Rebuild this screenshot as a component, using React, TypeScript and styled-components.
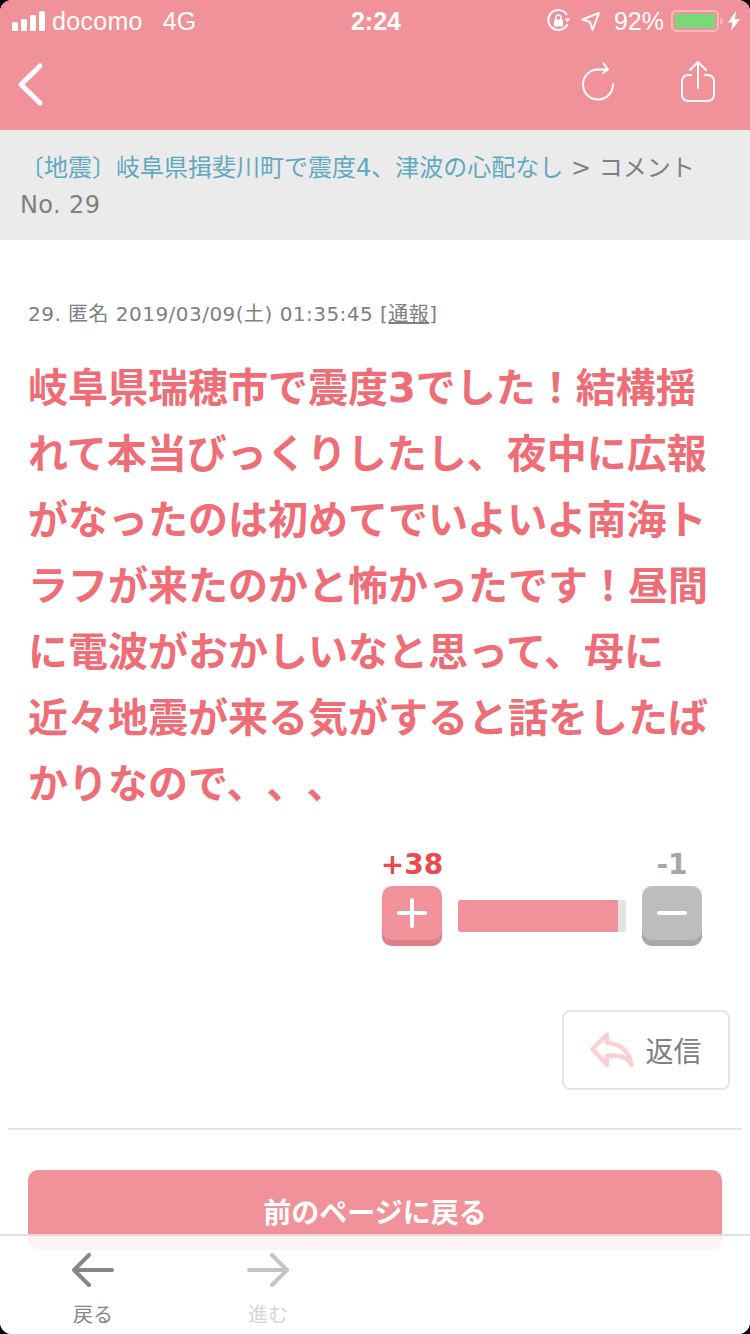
import styled, { createGlobalStyle } from "styled-components";

const pink = "#f19199";

const GlobalStyle = createGlobalStyle`
  html, body {
    margin: 0;
    padding: 0;
    background: #000;
  }
  * {
    box-sizing: border-box;
  }
`;

const Screen = styled.div`
  position: relative;
  width: 750px;
  height: 1334px;
  overflow: hidden;
  background: #fff;
  border-radius: 12px;
  font-family: "DejaVu Sans", "Noto Sans CJK JP", sans-serif;
  text-spacing-trim: space-all;
`;
const Header = styled.header`
  height: 130px;
  background: ${pink};
  color: #fff;
`;
const StatusBar = styled.div`
  height: 40px;
  padding: 2px 10px 0 12px;
  display: flex;
  align-items: center;
  justify-content: space-between;
  font-family: "Liberation Sans", sans-serif;
  font-size: 25px;
`;
const StatusSide = styled.div<{ $end?: boolean }>`
  width: 300px;
  display: flex;
  align-items: center;
  justify-content: ${(p) => (p.$end ? "flex-end" : "flex-start")};
`;
const Carrier = styled.span`
  margin-left: 7px;
  font-size: 25px;
  letter-spacing: 0.3px;
`;
const Network = styled.span`
  margin-left: 20px;
  font-size: 25px;
`;
const Clock = styled.span`
  font-weight: 700;
  font-size: 25px;
`;
const Percent = styled.span`
  margin: 0 7px 0 13px;
  font-size: 25px;
`;
const NavBar = styled.div`
  height: 90px;
  padding: 0 35px 0 16px;
  display: flex;
  align-items: flex-start;
  justify-content: space-between;
`;
const BackButton = styled.div`
  margin-top: 21px;
  height: 48px;
`;
const NavActions = styled.div`
  display: flex;
  gap: 66px;
  margin-top: 21px;
`;
const Breadcrumb = styled.nav`
  height: 110px;
  padding: 20px 20px 0;
  background: #ebebeb;
  color: #808080;
  font-size: 24px;
  line-height: 37px;
`;
const CrumbLink = styled.span`
  color: #60a9bf;
`;
const CrumbNumber = styled.div`
  letter-spacing: 0.4px;
`;
const Post = styled.section`
  padding: 60px 28px 0;
`;
const Meta = styled.div`
  color: #808080;
  font-size: 20px;
  line-height: 28px;
  letter-spacing: 0.47px;
`;
const Report = styled.span`
  text-decoration: underline;
`;
const Body = styled.p`
  margin: 27px 0 0;
  color: #ee6d76;
  font-size: 40px;
  font-weight: 700;
  line-height: 66px;
  white-space: nowrap;
`;
const VoteRow = styled.div`
  margin-top: 33px;
  padding-right: 48px;
  display: flex;
  justify-content: flex-end;
  align-items: flex-end;
  gap: 16px;
`;
const VoteColumn = styled.div`
  width: 60px;
  display: flex;
  flex-direction: column;
  align-items: center;
`;
const VoteCount = styled.div<{ $up?: boolean }>`
  height: 30px;
  margin-bottom: 6px;
  color: ${(p) => (p.$up ? "#e94a4f" : "#a6a6a6")};
  font-size: 28px;
  font-weight: 700;
  line-height: 30px;
  white-space: nowrap;
`;
const VoteButton = styled.div<{ $up?: boolean }>`
  width: 60px;
  height: 60px;
  border-radius: 10px;
  display: flex;
  align-items: center;
  justify-content: center;
  padding-bottom: 6px;
  background: ${(p) => (p.$up ? pink : "#bdbdbd")};
  box-shadow: inset 0 -6px 0 ${(p) => (p.$up ? "#df7f88" : "#a8a8a8")};
`;
const Meter = styled.div`
  width: 168px;
  height: 32px;
  margin-bottom: 14px;
  border-radius: 3px;
  overflow: hidden;
  background: #e3e3e3;
`;
const MeterFill = styled.div`
  height: 100%;
  background: ${pink};
`;
const ReplyRow = styled.div`
  margin-top: 64px;
  padding-right: 20px;
  display: flex;
  justify-content: flex-end;
  width: 750px;
`;
const ReplyButton = styled.div`
  width: 168px;
  height: 80px;
  border: 2px solid #e5e5e5;
  border-radius: 8px;
  display: flex;
  align-items: center;
  justify-content: center;
  gap: 11px;
  color: #808080;
  font-size: 28px;
`;
const Divider = styled.hr`
  margin: 38px 8px 0;
  border: 0;
  border-top: 2px solid #e5e5e5;
`;
const BackPageWrap = styled.div`
  padding: 40px 28px 0;
`;
const BackPageButton = styled.div`
  height: 80px;
  border-radius: 10px;
  background: ${pink};
  color: #fff;
  font-size: 28px;
  font-weight: 700;
  line-height: 88px;
  text-align: center;
`;
const Toolbar = styled.footer`
  position: absolute;
  left: 0;
  right: 0;
  bottom: 0;
  height: 100px;
  padding-left: 72px;
  display: flex;
  gap: 133px;
  border-top: 2px solid rgba(205, 205, 205, 0.6);
  background: rgba(255, 255, 255, 0.88);
`;
const ToolItem = styled.div<{ $off?: boolean }>`
  width: 42px;
  padding-top: 17px;
  display: flex;
  flex-direction: column;
  align-items: center;
  color: ${(p) => (p.$off ? "#d6d6d6" : "#868686")};
  font-size: 20px;
  line-height: 26px;
  white-space: nowrap;
`;
const ToolLabel = styled.span`
  margin-top: 15px;
`;

const SignalBars = () => (
  <svg width="33" height="20" viewBox="0 0 33 20" fill="#fff">
    <rect x="0" y="11" width="6" height="9" rx="1.500" />
    <rect x="9" y="8" width="6" height="12" rx="1.500" />
    <rect x="18" y="4" width="6" height="16" rx="1.500" />
    <rect x="27" y="0" width="6" height="20" rx="1.500" />
  </svg>
);

const RotationLock = () => (
  <svg width="24" height="24" viewBox="0 0 24 24" fill="none" stroke="#fff" strokeWidth="2" style={{ marginRight: 10 }}>
    <path d="M20.500 15A10 10 0 1 1 20 6" />
    <path d="M17.500 9.500h6l-3 3.500z" fill="#fff" stroke="none" />
    <rect x="7" y="10.500" width="9" height="7" rx="1" fill="#fff" stroke="none" />
    <path d="M9 11V8.500a2.500 2.500 0 0 1 5 0V11" strokeWidth="1.500" />
  </svg>
);

const LocationArrow = () => (
  <svg width="20" height="21" viewBox="0 0 20 21" fill="none" stroke="#fff" strokeWidth="2" strokeLinejoin="round">
    <path d="M1.500 8.500L18 2l-6.500 17-2.500-8z" />
  </svg>
);

const Battery = () => (
  <svg width="52" height="22" viewBox="0 0 52 22">
    <rect x="1" y="1" width="46" height="20" rx="4" fill="none" stroke="#f8b9bf" strokeWidth="2" />
    <rect x="4" y="4" width="40" height="14" rx="1" fill="#7ad977" />
    <path d="M49 7.500c2 .5 3 2 3 3.500s-1 3-3 3.500z" fill="#f8b9bf" />
  </svg>
);

const Bolt = () => (
  <svg width="12" height="20" viewBox="0 0 12 20" fill="#fff" style={{ marginLeft: 5 }}>
    <path d="M8 0L0 11.500h4.500L3 20l9-12H7z" />
  </svg>
);

const ChevronLeft = () => (
  <svg width="30" height="48" viewBox="0 0 30 48" fill="none" stroke="#fff" strokeWidth="5" strokeLinecap="round" strokeLinejoin="round">
    <path d="M24 5L5 23.500 24 42" />
  </svg>
);

const Reload = () => (
  <svg width="34" height="40" viewBox="0 0 34 40" fill="none" stroke="#fff" strokeWidth="2" strokeLinecap="round" strokeLinejoin="round">
    <path d="M32 23A15 15 0 1 1 17 8.500h9" />
    <path d="M22.500 2.500L27 8.500l-5 3.500" />
  </svg>
);

const Share = () => (
  <svg width="34" height="42" viewBox="0 0 34 42" fill="none" stroke="#fff" strokeWidth="2" strokeLinecap="round" strokeLinejoin="round">
    <path d="M10 14H7a6 6 0 0 0-6 6v14a6 6 0 0 0 6 6h20a6 6 0 0 0 6-6V20a6 6 0 0 0-6-6h-3" />
    <path d="M17 1v26M9 9l8-8 8 8" />
  </svg>
);

const VoteIcon = ({ plus }: { plus?: boolean }) => (
  <svg width="30" height="30" viewBox="0 0 30 30" fill="none" stroke="#fff" strokeWidth="4" strokeLinecap="round">
    <path d="M2 15h26" />
    {plus && <path d="M15 2v26" />}
  </svg>
);

const ReplyArrow = () => (
  <svg width="44" height="36" viewBox="0 0 44 36" fill="none" stroke="#f9d0d4" strokeWidth="4.500" strokeLinecap="round" strokeLinejoin="round">
    <path d="M17 2.500L2.500 17 17 33V23.500c11 0 20 0 24.500 9.500C40 20 30 11 17 11z" />
  </svg>
);

const ToolArrow = ({ forward, color }: { forward?: boolean; color: string }) => (
  <svg width="42" height="34" viewBox="0 0 42 34" fill="none" stroke={color} strokeWidth="4" strokeLinecap="round" strokeLinejoin="round">
    {forward ? <path d="M2 17h38M25 2l15 15-15 15" /> : <path d="M40 17H2M17 2L2 17l15 15" />}
  </svg>
);

const App = () => {
  const up = 38;
  const down = 1;
  return (
    <Screen>
      <GlobalStyle />
      <Header>
        <StatusBar>
          <StatusSide>
            <SignalBars />
            <Carrier>docomo</Carrier>
            <Network>4G</Network>
          </StatusSide>
          <Clock>2:24</Clock>
          <StatusSide $end>
            <RotationLock />
            <LocationArrow />
            <Percent>92%</Percent>
            <Battery />
            <Bolt />
          </StatusSide>
        </StatusBar>
        <NavBar>
          <BackButton>
            <ChevronLeft />
          </BackButton>
          <NavActions>
            <Reload />
            <Share />
          </NavActions>
        </NavBar>
      </Header>
      <Breadcrumb>
        <CrumbLink>〔地震〕岐阜県揖斐川町で震度4、津波の心配なし</CrumbLink> &gt; コメント
        <CrumbNumber>No. 29</CrumbNumber>
      </Breadcrumb>
      <Post>
        <Meta>
          29. 匿名 2019/03/09(土) 01:35:45 [<Report>通報</Report>]
        </Meta>
        <Body>
          岐阜県瑞穂市で震度3でした！結構揺
          <br />
          れて本当びっくりしたし、夜中に広報
          <br />
          がなったのは初めてでいよいよ南海ト
          <br />
          ラフが来たのかと怖かったです！昼間
          <br />
          に電波がおかしいなと思って、母に
          <br />
          近々地震が来る気がすると話をしたば
          <br />
          かりなので、、、
        </Body>
      </Post>
      <VoteRow>
        <VoteColumn>
          <VoteCount $up>+{up}</VoteCount>
          <VoteButton $up>
            <VoteIcon plus />
          </VoteButton>
        </VoteColumn>
        <Meter>
          <MeterFill style={{ width: `${(up / (up + down + 1)) * 100}%` }} />
        </Meter>
        <VoteColumn>
          <VoteCount>-{down}</VoteCount>
          <VoteButton>
            <VoteIcon />
          </VoteButton>
        </VoteColumn>
      </VoteRow>
      <ReplyRow>
        <ReplyButton>
          <ReplyArrow />
          返信
        </ReplyButton>
      </ReplyRow>
      <Divider />
      <BackPageWrap>
        <BackPageButton>前のページに戻る</BackPageButton>
      </BackPageWrap>
      <Toolbar>
        <ToolItem>
          <ToolArrow color="#868686" />
          <ToolLabel>戻る</ToolLabel>
        </ToolItem>
        <ToolItem $off>
          <ToolArrow forward color="#c4c4c4" />
          <ToolLabel>進む</ToolLabel>
        </ToolItem>
      </Toolbar>
    </Screen>
  );
};

export default App;
